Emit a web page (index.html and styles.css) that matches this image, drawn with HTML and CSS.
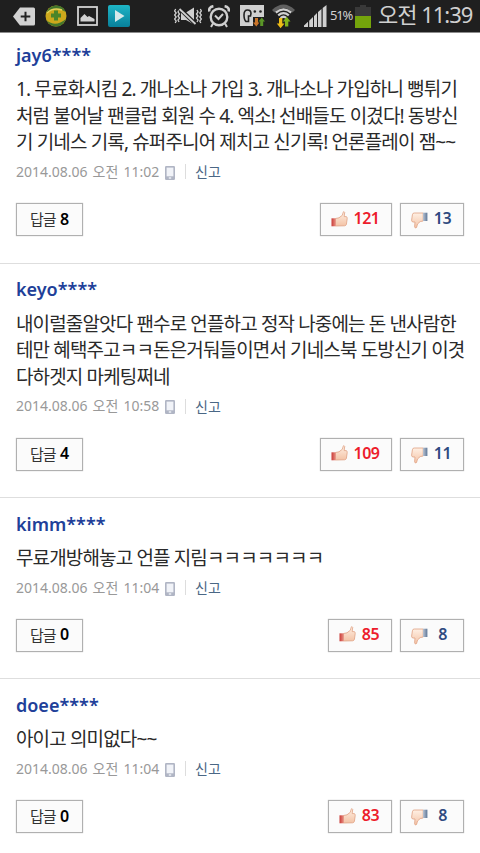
FILE: index.html
```
<!DOCTYPE html>
<html lang="ko">
<head>
    <meta charset="UTF-8">
    <meta name="viewport" content="width=device-width, initial-scale=1.0">
    <title>댓글</title>
    <link rel="stylesheet" href="styles.css">
</head>
<body>
    <!-- shared icons -->
    <svg class="defs" width="0" height="0">
        <defs>
            <linearGradient id="skin" x1="0" y1="0" x2="0" y2="1">
                <stop offset="0" stop-color="#fff0e4"/>
                <stop offset="1" stop-color="#f3c3a6"/>
            </linearGradient>
            <linearGradient id="red" x1="0" y1="0" x2="1" y2="0">
                <stop offset="0" stop-color="#c93a36"/>
                <stop offset="1" stop-color="#e89084"/>
            </linearGradient>
            <linearGradient id="blue" x1="0" y1="0" x2="1" y2="0">
                <stop offset="0" stop-color="#b9c3d2"/>
                <stop offset="1" stop-color="#5f7797"/>
            </linearGradient>
            <linearGradient id="teal" x1="0" y1="0" x2="0" y2="1">
                <stop offset="0" stop-color="#1eb5c6"/>
                <stop offset="1" stop-color="#08809a"/>
            </linearGradient>
            <symbol id="up" viewBox="0 0 17 16">
                <path d="M4.5 7.5 8 6.8 11.4 4.2 12.2 1.2Q13-.1 13.7 1.3L13.2 5.6H15.2Q16.5 6 16.2 7.6L15.4 13.4Q15 14.7 13.5 14.8L4.5 15Z" fill="url(#skin)" stroke="#dfa183" stroke-width=".8"/>
                <path d="M.5 7.3H4.7V15.3H.5Z" fill="url(#red)"/>
            </symbol>
            <symbol id="down" viewBox="0 0 17 17">
                <path d="M12.2 1H3.2Q1.6 1 1.4 2.8L.6 8.2Q.5 9.7 2 10H4L3.6 14.8Q4.3 17 5.6 15.4L6.5 12 9.2 9.6 12.2 9Z" fill="url(#skin)" stroke="#dfa183" stroke-width=".8"/>
                <path d="M12 .7H16.4V9H12Z" fill="url(#blue)"/>
            </symbol>
            <symbol id="phone" viewBox="0 0 10 14">
                <rect width="10" height="14" rx="1.3" fill="#b0b5c4"/>
                <rect x="1.6" y="1.6" width="6.8" height="8.7" fill="#f1f3f8"/>
                <rect x="3.8" y="11.3" width="2.4" height="1.4" fill="#f1f3f8"/>
            </symbol>
        </defs>
    </svg>

    <header class="status">
        <div class="left">
            <svg width="22" height="19" viewBox="0 0 22 19"><path d="M7 .5H20.5Q22 .5 22 2V17Q22 18.5 20.5 18.5H7L0 9.5Z" fill="#d2d2d2"/><path d="M12.5 4.7V14.3M7.7 9.5H17.3" stroke="#222" stroke-width="2"/></svg>
            <svg width="22" height="22" viewBox="0 0 22 22"><circle cx="11" cy="11" r="10.5" fill="#cda81c"/><path d="M1 8Q5 0 12 .6 18 1 20.8 7 13 1 1 8M1.5 15Q10 23 21 14 18 21.5 11 21.5 4.5 21.5 1.5 15" fill="#43762c"/><path d="M2 8Q8 2 17 5" stroke="#e7d35a" stroke-width="1.5" fill="none"/><path d="M11 5.5V15.5M6 10.5H16" stroke="#4b8529" stroke-width="4"/></svg>
            <svg width="21" height="20" viewBox="0 0 21 20"><rect x="1" y="1" width="19" height="18" fill="none" stroke="#d2d2d2" stroke-width="1.8"/><path d="M3.5 15.5V12L7.5 8 10.5 11 12 10 17.5 13V15.5Z" fill="#d2d2d2"/></svg>
            <svg width="22" height="22" viewBox="0 0 22 22"><rect width="22" height="22" rx="2" fill="url(#teal)"/><path d="M7 5V17L16.5 11Z" fill="#d5e9ea"/></svg>
        </div>
        <div class="right">
            <svg class="mute" width="28" height="20" viewBox="0 0 28 20"><g fill="none" stroke="#cfcfcf" stroke-width="1.3"><path d="M1.7 3 .6 5 2.2 7 .6 9 2.2 11 .6 13 2.2 15 1.2 17M5 4 4 6 5.5 8 4 10 5.5 12 4 14 5 16M23 4 24 6 22.5 8 24 10 22.5 12 24 14 23 16M26.3 3 27.4 5 25.8 7 27.4 9 25.8 11 27.4 13 25.8 15 26.8 17"/></g><path d="M7 6.5H12L20 1.5V18.5L12 14H7Z" fill="#cfcfcf"/><path d="M5.5 2.5 22 18.5" stroke="#1f1f1f" stroke-width="4"/><path d="M5.5 3 21.5 18" stroke="#cfcfcf" stroke-width="1.8"/></svg>
            <svg class="alarm" width="22" height="23" viewBox="0 0 22 23"><circle cx="11" cy="12" r="8.3" fill="none" stroke="#cfcfcf" stroke-width="2.4"/><path d="M1.3 6.5Q.4 2 5.4 1.2M20.7 6.5Q21.6 2 16.6 1.2" fill="none" stroke="#cfcfcf" stroke-width="2.6"/><path d="M7 10.5 10.5 14 15 9M5 18.5 3 22M17 18.5 19 22" fill="none" stroke="#cfcfcf" stroke-width="2"/></svg>
            <svg class="data" width="25" height="22" viewBox="0 0 25 22"><path d="M0 0H24V12H13V21H0Z" fill="#d0d0d0"/><path d="M4 10Q4 5 7.5 5 11 5 11 8.5L10.5 11H8.5V16.5H6Q4 15 4 10Z" fill="#d0d0d0" stroke="#222" stroke-width="1.6"/><g fill="#222"><circle cx="14.8" cy="6.5" r="1.3"/><circle cx="20.5" cy="6.5" r="1.3"/></g><path d="M15 13H18V17.5H19.5L16.3 21.5 13 17.5H15Z" fill="#c97429"/><path d="M20.2 21V16.5H18.5L21.8 12.5 25 16.5H23.2V21Z" fill="#5a9627"/></svg>
            <svg class="wifi" width="23" height="25" viewBox="0 0 23 25"><path d="M0 6Q11.5-5 23 6L20.5 8.6Q11.5 0 2.5 8.6Z" fill="#606060"/><g fill="none" stroke="#d0d0d0" stroke-width="2.2"><path d="M3.8 8.7Q11.5 2 19.2 8.7M6.2 11.3Q11.5 7 16.8 11.3M8.5 14Q11.5 11.5 14.5 14"/></g><path d="M7 14H10.3V19.5H12.5L8.6 24.3 4.8 19.5H7Z" fill="#efbd16"/><path d="M13 22.5V17.5H10.8L14.7 12.7 18.5 17.5H16.3V22.5Z" fill="#82b51b"/></svg>
            <svg class="signal" width="23" height="22" viewBox="0 0 23 22"><path d="M0 22V20.5L4 16.8V22ZM5.2 22V15.7L9 12V22ZM10 22V11L13 8V22ZM14 22V7L17.5 4V22ZM18.7 22V3L22.5 0V22Z" fill="#d0d0d0"/></svg>
            <span class="percent">51%</span>
            <svg class="battery" width="16" height="23" viewBox="0 0 16 23"><path d="M5 0H11V2H16V23H0V2H5Z" fill="#393939"/><path d="M0 11H16V23H0Z" fill="#74a40b"/></svg>
            <span class="time">오전 11:39</span>
        </div>
    </header>

    <main class="comments">
        <div class="comment">
            <h2>jay6****</h2>
            <p>1. 무료화시킴 2. 개나소나 가입 3. 개나소나 가입하니 뻥튀기<br>처럼 불어날 팬클럽 회원 수 4. 엑소! 선배들도 이겼다! 동방신<br>기 기네스 기록, 슈퍼주니어 제치고 신기록! 언론플레이 잼~~</p>
            <div class="meta"><span class="date">2014.08.06 오전 11:02</span><svg width="10" height="14"><use href="#phone"/></svg><a>신고</a></div>
            <div class="btns">
                <div class="btn reply">답글 <b>8</b></div>
                <div class="btn good wide"><svg width="17" height="16"><use href="#up"/></svg><b>121</b></div>
                <div class="btn bad"><svg width="17" height="17"><use href="#down"/></svg><b>13</b></div>
            </div>
        </div>

        <div class="comment">
            <h2>keyo****</h2>
            <p>내이럴줄알앗다 팬수로 언플하고 정작 나중에는 돈 낸사람한<br>테만 혜택주고ㅋㅋ돈은거둬들이면서 기네스북 도방신기 이겻<br>다하겟지 마케팅쩌네</p>
            <div class="meta"><span class="date">2014.08.06 오전 10:58</span><svg width="10" height="14"><use href="#phone"/></svg><a>신고</a></div>
            <div class="btns">
                <div class="btn reply">답글 <b>4</b></div>
                <div class="btn good wide"><svg width="17" height="16"><use href="#up"/></svg><b>109</b></div>
                <div class="btn bad"><svg width="17" height="17"><use href="#down"/></svg><b>11</b></div>
            </div>
        </div>

        <div class="comment">
            <h2>kimm****</h2>
            <p>무료개방해놓고 언플 지림ㅋㅋㅋㅋㅋㅋㅋ</p>
            <div class="meta"><span class="date">2014.08.06 오전 11:04</span><svg width="10" height="14"><use href="#phone"/></svg><a>신고</a></div>
            <div class="btns">
                <div class="btn reply">답글 <b>0</b></div>
                <div class="btn good"><svg width="17" height="16"><use href="#up"/></svg><b>85</b></div>
                <div class="btn bad"><svg width="17" height="17"><use href="#down"/></svg><b>8</b></div>
            </div>
        </div>

        <div class="comment">
            <h2>doee****</h2>
            <p>아이고 의미없다~~</p>
            <div class="meta"><span class="date">2014.08.06 오전 11:04</span><svg width="10" height="14"><use href="#phone"/></svg><a>신고</a></div>
            <div class="btns">
                <div class="btn reply">답글 <b>0</b></div>
                <div class="btn good"><svg width="17" height="16"><use href="#up"/></svg><b>83</b></div>
                <div class="btn bad"><svg width="17" height="17"><use href="#down"/></svg><b>8</b></div>
            </div>
        </div>
    </main>
</body>
</html>
```
FILE: styles.css
```
* {
  box-sizing: border-box;
}
body {
  margin: 0;
  height: 853px;
  overflow: hidden;
  background: #fff;
  font-family: "Noto Sans", "Noto Sans CJK KR", sans-serif;
}
.defs {
  display: block;
}
svg {
  flex: none;
}
.status {
  height: 33px;
  display: flex;
  justify-content: space-between;
  background: #1f1f1f;
  border-bottom: 1px solid #8c8c8c;
  color: #d0d0d0;
}
.left {
  display: flex;
  align-items: center;
  gap: 10px;
  padding-left: 13px;
}
.right {
  display: flex;
  align-items: center;
}
.alarm {
  margin-left: 6px;
}
.data {
  margin-left: 10px;
}
.wifi {
  margin-left: 7px;
}
.signal {
  margin-left: 9px;
}
.percent {
  width: 28px;
  padding-left: 3px;
  font-size: 13px;
  letter-spacing: -1.2px;
  line-height: 30px;
  height: 32px;
}
.time {
  width: 109px;
  padding-left: 7px;
  font-size: 22px;
  letter-spacing: -1px;
  line-height: 29px;
  height: 32px;
  white-space: nowrap;
}
.comments {
  margin-top: -4px;
}
.comment {
  height: 181.3px;
  padding: 12.5px 16px 0;
  border-bottom: 1px solid #dedede;
}
.comment:nth-child(-n + 2) {
  height: 234.5px;
}
h2 {
  margin: 0;
  height: 26px;
  line-height: 26px;
  font-size: 18px;
  font-weight: 600;
  color: #213f99;
}
p {
  margin: 8.6px 0 0;
  color: #2a2a2a;
  font-size: 19px;
  line-height: 26.6px;
  letter-spacing: -0.86px;
  white-space: nowrap;
}
.meta {
  display: flex;
  align-items: center;
  height: 20px;
  margin-top: 5.9px;
  font-size: 14px;
  line-height: 20px;
  color: #999;
}
.date {
  width: 143px;
  word-spacing: 1.4px;
  white-space: nowrap;
}
.meta svg {
  margin-left: 6px;
  margin-top: 2px;
}
.meta a {
  margin-left: 10px;
  padding-left: 9px;
  border-left: 1px solid #ddd;
  line-height: 15px;
  color: #4a6785;
}
.btns {
  display: flex;
  gap: 8px;
  margin-top: 21.3px;
}
.btn {
  display: flex;
  align-items: center;
  width: 64px;
  height: 33px;
  padding-bottom: 2px;
  border: 1px solid #b0b0b0;
  box-shadow: 0 0 1px #bbb;
  background: #fbfbfb;
  font-size: 16px;
  white-space: pre;
}
.btn b {
  flex: 1;
  padding-bottom: 1px;
  text-align: center;
  font-weight: 600;
  letter-spacing: -0.5px;
}
.reply {
  width: 67px;
  margin-right: auto;
  padding-left: 13px;
  font-size: 15px;
  letter-spacing: -1px;
  word-spacing: 1.5px;
  color: #333;
}
.btn.reply b {
  flex: none;
  padding-bottom: 0;
  font-size: 16px;
  color: #000;
}
.good {
  padding-left: 10px;
  padding-right: 6px;
  color: #ed1c2b;
}
.bad {
  padding-left: 10px;
  padding-right: 6px;
  color: #2f4a80;
}
.bad svg {
  margin-top: 4px;
}
.wide {
  width: 72px;
}
```
